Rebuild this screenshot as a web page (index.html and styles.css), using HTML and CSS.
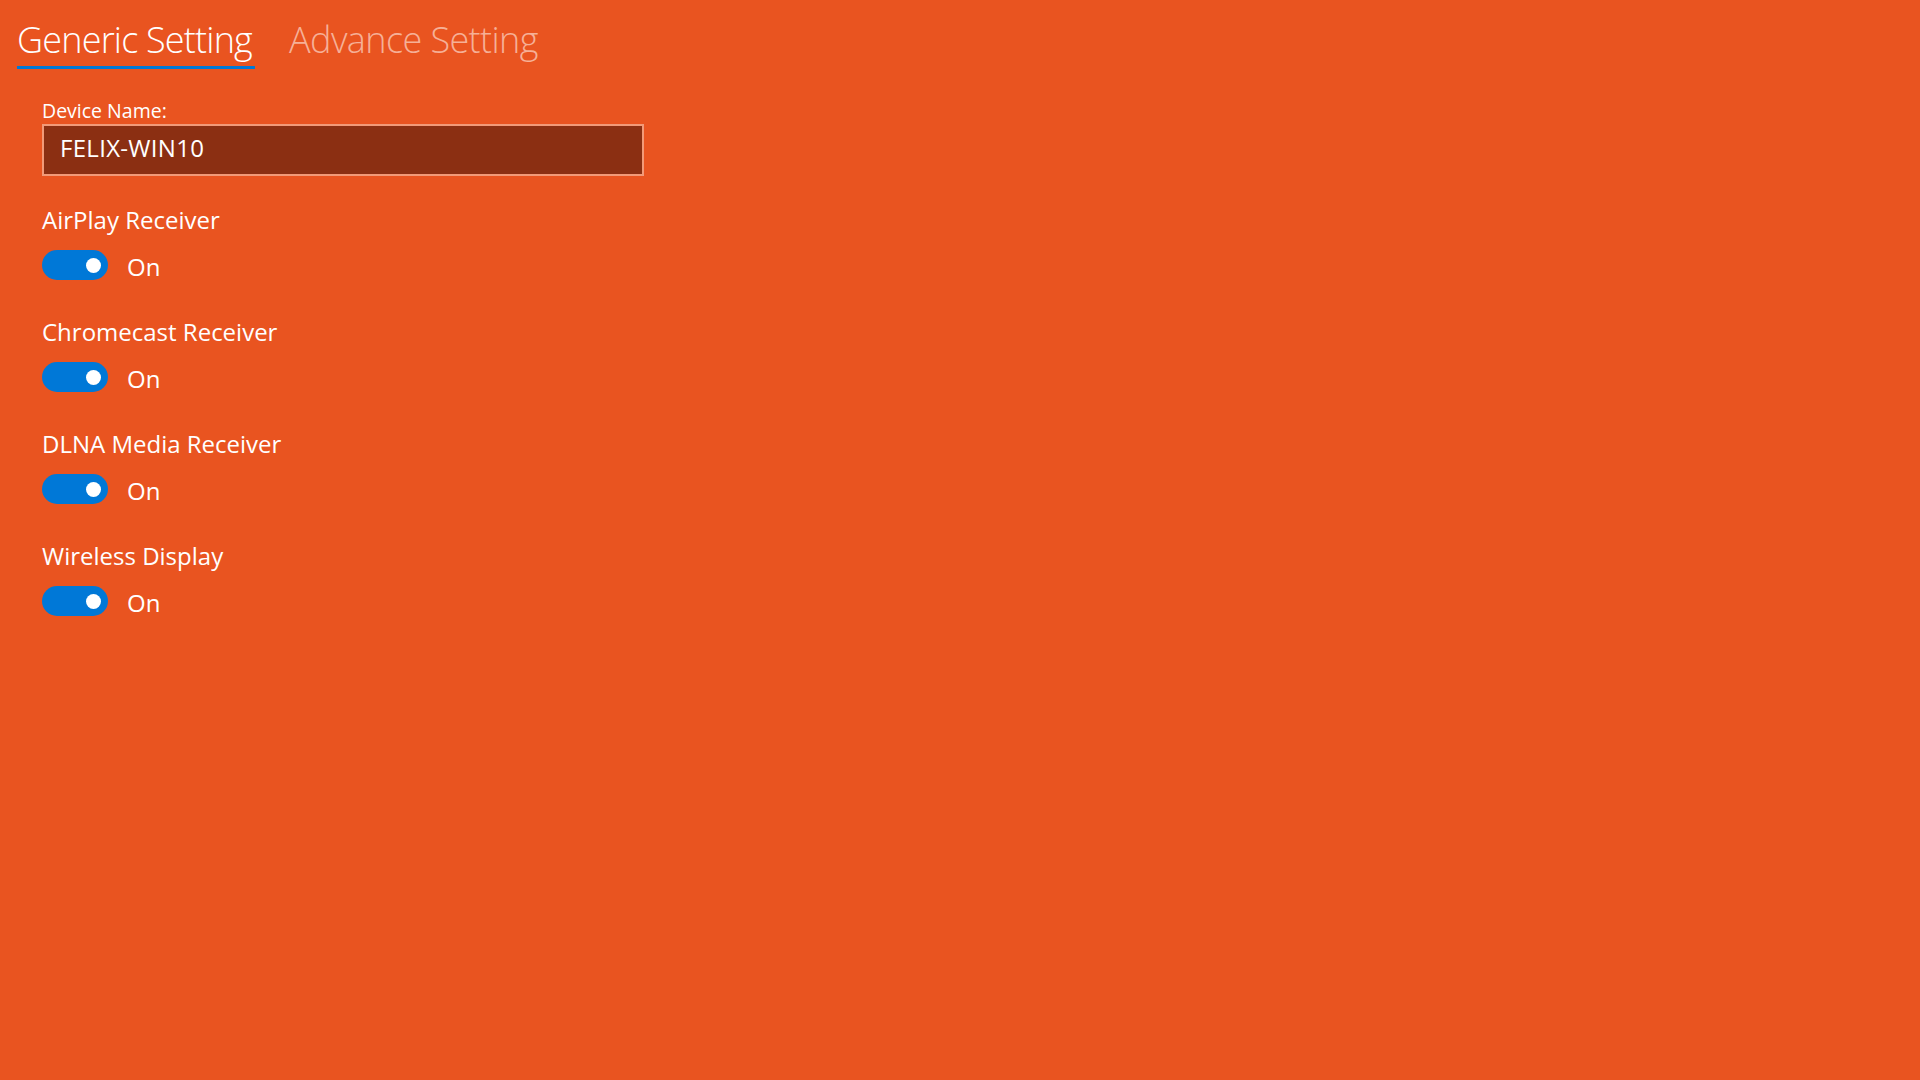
FILE: index.html
```html
<!DOCTYPE html>
<html lang="en">
<head>
<meta charset="utf-8">
<title>Settings</title>
<link rel="stylesheet" href="styles.css">
</head>
<body>
<div class="page">
  <nav class="tabs">
    <div class="tab active">Generic Setting</div>
    <div class="tab">Advance Setting</div>
  </nav>
  <main class="content">
    <div class="field">
      <label class="field-label">Device Name:</label>
      <div class="input">FELIX-WIN10</div>
    </div>
    <section class="setting">
      <div class="setting-label">AirPlay Receiver</div>
      <div class="switch-row"><span class="switch"><span class="knob"></span></span><span class="state">On</span></div>
    </section>
    <section class="setting">
      <div class="setting-label">Chromecast Receiver</div>
      <div class="switch-row"><span class="switch"><span class="knob"></span></span><span class="state">On</span></div>
    </section>
    <section class="setting">
      <div class="setting-label">DLNA Media Receiver</div>
      <div class="switch-row"><span class="switch"><span class="knob"></span></span><span class="state">On</span></div>
    </section>
    <section class="setting">
      <div class="setting-label">Wireless Display</div>
      <div class="switch-row"><span class="switch"><span class="knob"></span></span><span class="state">On</span></div>
    </section>
  </main>
</div>
</body>
</html>
```
FILE: styles.css
```css
html, body {
  margin: 0;
  padding: 0;
  height: 100%;
}
body {
  background: #e95420;
  color: #ffffff;
  font-family: "Open Sans", "Noto Sans", "Liberation Sans", sans-serif;
}
.page {
  min-height: 100%;
}
.tabs {
  display: flex;
  gap: 34px;
  padding: 16px 0 0 17px;
}
.tab {
  font-size: 36px;
  font-weight: 300;
  line-height: 48px;
  letter-spacing: -0.6px;
  color: #f6b097;
  padding: 0 3px 2px 0;
  border-bottom: 3px solid transparent;
}
.tab.active {
  color: #ffffff;
  letter-spacing: -0.8px;
  border-bottom-color: #0078d7;
}
.content {
  padding: 30px 0 0 42px;
  display: flex;
  flex-direction: column;
}
.field {
  display: flex;
  flex-direction: column;
  gap: 1px;
}
.field-label {
  font-size: 19.5px;
  line-height: 24px;
}
.input {
  box-sizing: border-box;
  width: 602px;
  height: 52px;
  border: 2px solid #f29a78;
  background: #8b2f12;
  font-size: 24px;
  line-height: 32px;
  padding: 6px 16px 10px;
  letter-spacing: 0.3px;
}
.setting {
  display: flex;
  flex-direction: column;
  gap: 15px;
  margin-top: 28px;
}
.setting + .setting {
  margin-top: 36px;
}
.setting-label {
  font-size: 24px;
  line-height: 31px;
}
.switch-row {
  display: flex;
  align-items: flex-start;
  gap: 19px;
  height: 30px;
}
.switch {
  box-sizing: border-box;
  width: 66px;
  height: 30px;
  border-radius: 15px;
  background: #0078d7;
  display: flex;
  align-items: center;
  justify-content: flex-end;
  padding-right: 7px;
}
.knob {
  width: 15px;
  height: 15px;
  border-radius: 50%;
  background: #ffffff;
}
.state {
  font-size: 24px;
  line-height: 30px;
  padding-top: 2px;
}
```
